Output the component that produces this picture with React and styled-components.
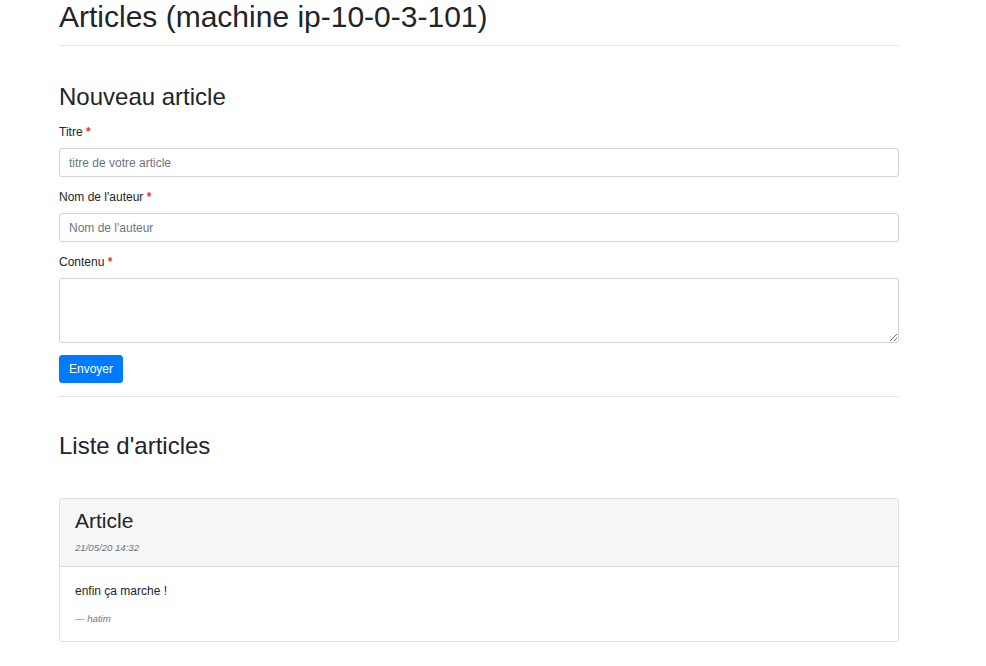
import React from "react";
import styled, { createGlobalStyle } from "styled-components";

const GlobalStyle = createGlobalStyle`
  html, body {
    margin: 0;
    padding: 0;
    background: #fff;
  }
  body {
    font-family: "Liberation Sans", Arial, sans-serif;
    font-size: 12px;
    line-height: 1.5;
    color: #212529;
  }
  * {
    box-sizing: border-box;
  }
`;

const Container = styled.div`
  width: 840px;
  margin-left: 59px;
`;

const PageTitle = styled.h1`
  font-size: 30px;
  font-weight: 500;
  line-height: 1.2;
  margin: -1.5px 0 0;
`;

const Divider = styled.hr`
  border: 0;
  border-top: 1px solid rgba(0, 0, 0, 0.1);
  margin: ${(p) => p.$top}px 0 0;
`;

const SectionTitle = styled.h2`
  font-size: 24px;
  font-weight: 500;
  line-height: 1.2;
  margin: ${(p) => p.$top}px 0 0;
`;

const Form = styled.form`
  display: flex;
  flex-direction: column;
  margin-top: 12px;
`;

const Group = styled.div`
  display: flex;
  flex-direction: column;
  margin-bottom: 11px;
`;

const Label = styled.label`
  display: block;
  margin-bottom: 7px;
`;

const Required = styled.span`
  color: #e3342f;
  font-weight: bold;
`;

const fieldStyles = `
  display: block;
  width: 100%;
  padding: 4.5px 9px;
  font-family: "Liberation Sans", Arial, sans-serif;
  font-size: 12px;
  line-height: 1.5;
  color: #495057;
  background: #fff;
  border: 1px solid #ced4da;
  border-radius: 3px;
  outline: none;
  &::placeholder {
    color: #6c757d;
    opacity: 1;
  }
`;

const Input = styled.input.attrs({ type: "text" })`
  ${fieldStyles}
  height: 29px;
`;

const TextArea = styled.textarea`
  ${fieldStyles}
  height: 65px;
  resize: vertical;
`;

const SubmitButton = styled.button`
  align-self: flex-start;
  height: 28.5px;
  padding: 4.5px 9px;
  font-family: "Liberation Sans", Arial, sans-serif;
  font-size: 12px;
  line-height: 1.5;
  color: #fff;
  background: #007bff;
  border: 1px solid #007bff;
  border-radius: 3px;
  margin-top: 0.5px;
`;

const Card = styled.div`
  margin-top: 37px;
  border: 1px solid rgba(0, 0, 0, 0.125);
  border-radius: 3px;
  overflow: hidden;
`;

const CardHeader = styled.div`
  padding: 9px 15px;
  background: #f6f6f6;
  border-bottom: 1px solid rgba(0, 0, 0, 0.125);
`;

const CardTitle = styled.h3`
  font-size: 21px;
  font-weight: 500;
  line-height: 1.2;
  margin: 0 0 6px;
`;

const Meta = styled.p`
  margin: 0;
  font-size: 9.6px;
  line-height: 18px;
  font-style: italic;
  color: #6c757d;
`;

const CardBody = styled.div`
  padding: 15px;
`;

const Content = styled.p`
  margin: 0 0 12px;
`;

const Author = styled.footer`
  font-size: 9.6px;
  line-height: 1.5;
  font-style: italic;
  color: #6c757d;
`;

const Field = ({ label, placeholder, multiline }) => (
  <Group>
    <Label>
      {label} <Required>*</Required>
    </Label>
    {multiline ? <TextArea /> : <Input placeholder={placeholder} />}
  </Group>
);

const articles = [
  {
    title: "Article",
    date: "21/05/20 14:32",
    content: "enfin ça marche !",
    author: "hatim",
  },
];

export default function App() {
  return (
    <>
      <GlobalStyle />
      <Container>
        <PageTitle>Articles (machine ip-10-0-3-101)</PageTitle>
        <Divider $top={10} />

        <SectionTitle $top={37}>Nouveau article</SectionTitle>
        <Form onSubmit={(e) => e.preventDefault()}>
          <Field label="Titre" placeholder="titre de votre article" />
          <Field label="Nom de l'auteur" placeholder="Nom de l'auteur" />
          <Field label="Contenu" multiline />
          <SubmitButton type="submit">Envoyer</SubmitButton>
        </Form>
        <Divider $top={12.5} />

        <SectionTitle $top={35}>Liste d'articles</SectionTitle>
        {articles.map((a, i) => (
          <Card key={i}>
            <CardHeader>
              <CardTitle>{a.title}</CardTitle>
              <Meta>{a.date}</Meta>
            </CardHeader>
            <CardBody>
              <Content>{a.content}</Content>
              <Author>— {a.author}</Author>
            </CardBody>
          </Card>
        ))}
      </Container>
    </>
  );
}
